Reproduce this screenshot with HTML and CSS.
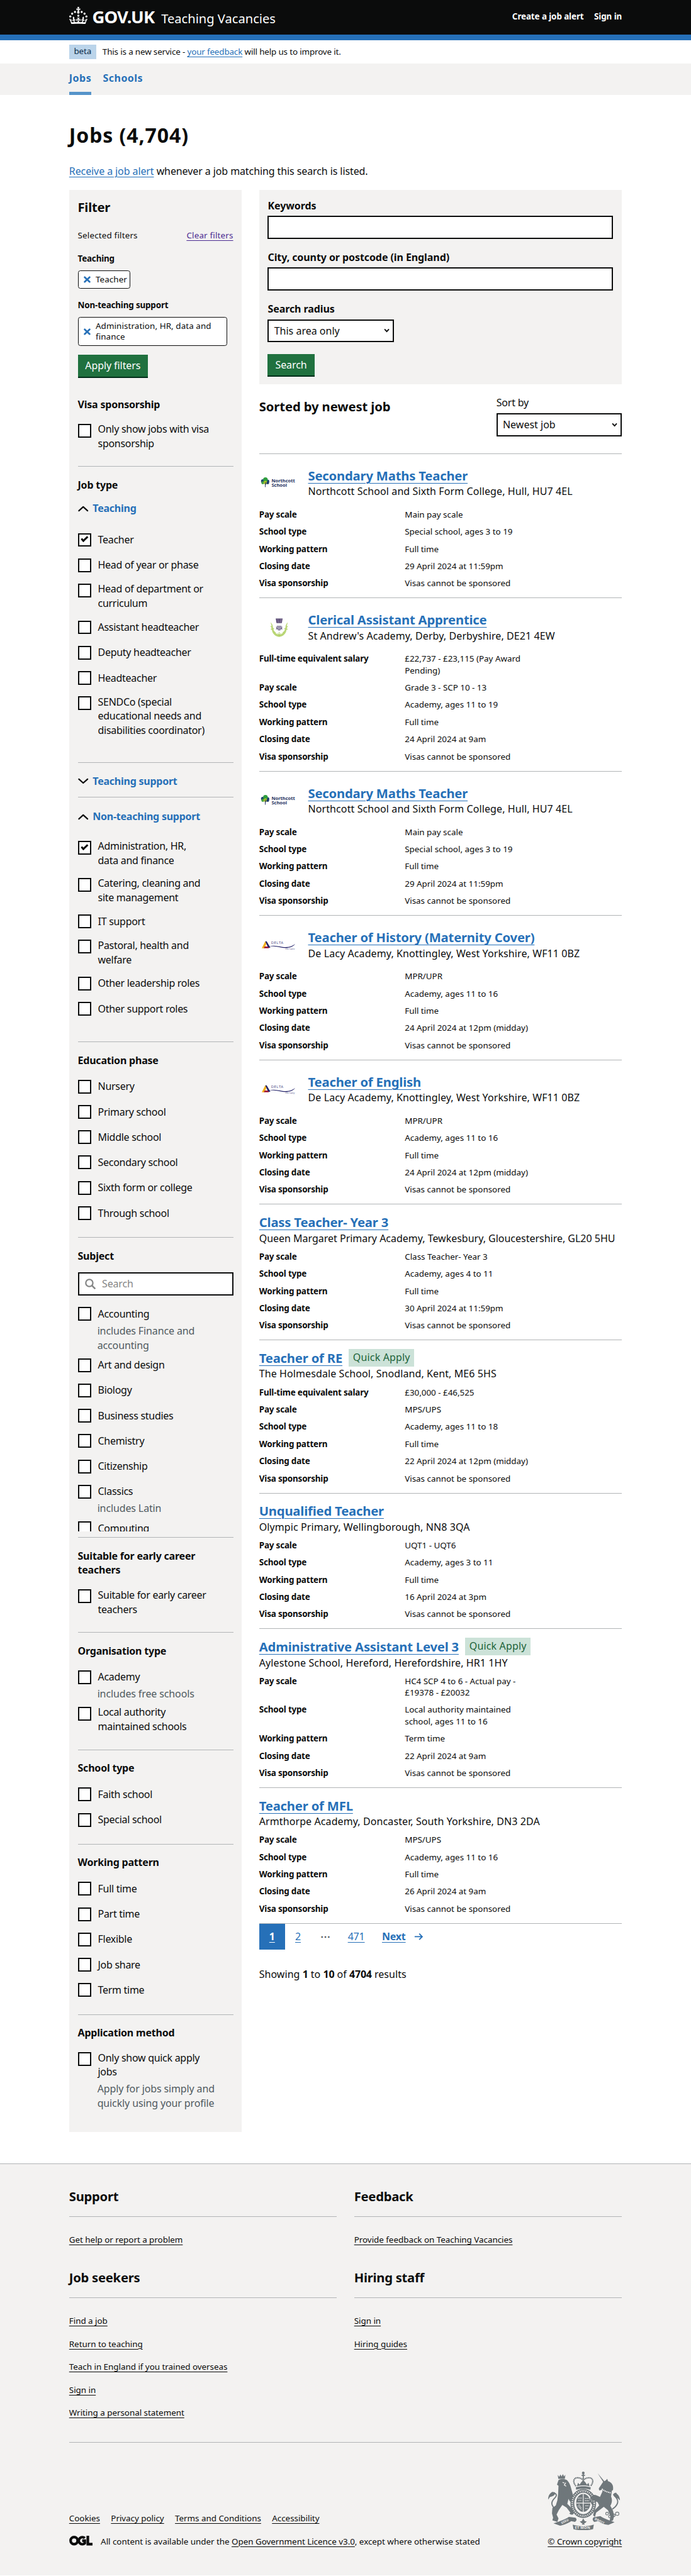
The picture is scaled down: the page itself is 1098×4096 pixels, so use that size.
FILE: index.html
```html
<!DOCTYPE html>
<html lang="en">
<head>
<meta charset="utf-8">
<title>Jobs - Teaching Vacancies - GOV.UK</title>
<link rel="stylesheet" href="styles.css">
</head>
<body>
<header class="header">
  <div class="container header-row">
    <a class="brand">
      <svg class="crown" viewBox="0 0 64 60" fill="#fff"><circle cx="20" cy="17.600" r="3.700"/><circle cx="10.200" cy="23.500" r="3.700"/><circle cx="3.700" cy="33.200" r="3.700"/><circle cx="31.700" cy="30.600" r="3.700"/><circle cx="43.300" cy="17.600" r="3.700"/><circle cx="53.200" cy="23.500" r="3.700"/><circle cx="59.700" cy="33.200" r="3.700"/><path d="M33.100,9.800c.2-.1.3-.3.5-.5l4.600,2.400v-6.800l-4.600,1.500c-.1-.2-.3-.3-.5-.5l1.900-5.900h-6.700l1.900,5.900c-.2.1-.3.3-.5.5l-4.600-1.500v6.800l4.600-2.400c.1.200.3.300.5.500l-2.600,8c-.9,2.800,1.200,5.700,4.100,5.700h0c3,0,5.100-2.900,4.100-5.700l-2.600-8ZM37,37.900s-3.400,3.800-4.100,6.100c2.200,0,4.200-.5,6.400-2.800l-.7,8.500c-2-2.800-4.400-4.100-5.700-3.800.1,3.100.5,6.700,5.800,7.200,3.700.3,6.700-1.500,7-3.800.4-2.600-2-4.300-3.700-1.600-1.400-4.500,2.400-6.100,4.900-3.200-1.900-4.500-1.800-7.700,2.400-10.900,3,4,2.600,7.300-1.200,11.100,2.400-1.300,6.200,0,4,4.600-1.200-2.800-3.700-2.200-4.200.2-.3,1.700.7,3.700,3,4.200,1.900.3,4.700-.9,7-5.900-1.300,0-2.400.7-3.900,1.700l2.400-8c.6,2.300,1.400,3.700,2.200,4.500.6-1.600.5-2.800,0-5.300l5,1.800c-2.600,3.600-5.200,8.700-7.300,17.500-7.400-1.100-15.700-1.700-24.500-1.700h0c-8.800,0-17.100.6-24.500,1.700-2.100-8.900-4.700-13.900-7.300-17.500l5-1.800c-.5,2.500-.6,3.700,0,5.300.8-.8,1.600-2.300,2.200-4.500l2.400,8c-1.500-1-2.600-1.700-3.900-1.700,2.300,5,5.200,6.200,7,5.900,2.300-.4,3.300-2.400,3-4.200-.5-2.400-3-3.100-4.200-.2-2.200-4.600,1.600-6,4-4.600-3.700-3.700-4.200-7.100-1.200-11.100,4.200,3.200,4.300,6.400,2.400,10.900,2.500-2.800,6.300-1.300,4.900,3.200-1.800-2.700-4.100-1-3.700,1.600.3,2.300,3.300,4.100,7,3.800,5.400-.5,5.700-4.200,5.800-7.200-1.300-.2-3.700,1-5.700,3.800l-.7-8.500c2.200,2.300,4.200,2.700,6.400,2.800-.7-2.300-4.100-6.100-4.100-6.100h10.600,0Z"/></svg>
      <span class="wordmark">GOV.UK</span><span class="service">Teaching Vacancies</span>
    </a>
    <nav class="header-nav"><a>Create a job alert</a><a>Sign in</a></nav>
  </div>
</header>
<div class="stripe"></div>
<div class="container phase"><span class="beta">beta</span><span>This is a new service - <a class="link">your feedback</a> will help us to improve it.</span></div>
<nav class="subnav"><div class="container subnav-row"><a class="active">Jobs</a><a>Schools</a></div></nav>

<main class="container">
  <h1>Jobs (4,704)</h1>
  <p class="alert"><a class="link">Receive a job alert</a> whenever a job matching this search is listed.</p>

  <div class="columns">
    <aside class="filters">
      <h2>Filter</h2>
      <div class="selected"><span>Selected filters</span><a class="link visited">Clear filters</a></div>
      <h3>Teaching</h3>
      <a class="tag"><svg viewBox="0 0 12 12"><path d="M1.700 2 10.300 10M10.300 2 1.700 10" stroke="#2670b8" stroke-width="3" stroke-linecap="round"/></svg><span>Teacher</span></a>
      <h3>Non-teaching support</h3>
      <a class="tag wide"><svg viewBox="0 0 12 12"><path d="M1.700 2 10.300 10M10.300 2 1.700 10" stroke="#2670b8" stroke-width="3" stroke-linecap="round"/></svg><span>Administration, HR, data and finance</span></a>
      <button class="button">Apply filters</button>

      <section class="group first">
        <h4>Visa sponsorship</h4>
        <label class="check"><input type="checkbox"><span>Only show jobs with visa sponsorship</span></label>
      </section>

      <section class="group jobtype">
        <h4>Job type</h4>
        <div class="fold open">
          <div class="fold-head"><svg viewBox="0 0 18 12"><path d="M1.500 10 9 3.200 16.500 10"/></svg>Teaching</div>
          <div class="fold-body">
            <label class="check"><input type="checkbox" checked><span>Teacher</span></label>
            <label class="check"><input type="checkbox"><span>Head of year or phase</span></label>
            <label class="check"><input type="checkbox"><span>Head of department or curriculum</span></label>
            <label class="check"><input type="checkbox"><span>Assistant headteacher</span></label>
            <label class="check"><input type="checkbox"><span>Deputy headteacher</span></label>
            <label class="check"><input type="checkbox"><span>Headteacher</span></label>
            <label class="check"><input type="checkbox"><span>SENDCo (special educational needs and disabilities coordinator)</span></label>
          </div>
        </div>
        <div class="fold"><div class="fold-head"><svg viewBox="0 0 18 12"><path d="M1.500 2 9 8.800 16.500 2"/></svg>Teaching support</div></div>
        <div class="fold open">
          <div class="fold-head"><svg viewBox="0 0 18 12"><path d="M1.500 10 9 3.200 16.500 10"/></svg>Non-teaching support</div>
          <div class="fold-body">
            <label class="check"><input type="checkbox" checked><span>Administration, HR,<br>data and finance</span></label>
            <label class="check"><input type="checkbox"><span>Catering, cleaning and<br>site management</span></label>
            <label class="check"><input type="checkbox"><span>IT support</span></label>
            <label class="check"><input type="checkbox"><span>Pastoral, health and<br>welfare</span></label>
            <label class="check"><input type="checkbox"><span>Other leadership roles</span></label>
            <label class="check"><input type="checkbox"><span>Other support roles</span></label>
          </div>
        </div>
      </section>

      <section class="group">
        <h4>Education phase</h4>
        <label class="check"><input type="checkbox"><span>Nursery</span></label>
        <label class="check"><input type="checkbox"><span>Primary school</span></label>
        <label class="check"><input type="checkbox"><span>Middle school</span></label>
        <label class="check"><input type="checkbox"><span>Secondary school</span></label>
        <label class="check"><input type="checkbox"><span>Sixth form or college</span></label>
        <label class="check"><input type="checkbox"><span>Through school</span></label>
      </section>

      <section class="group subject">
        <h4>Subject</h4>
        <div class="finder"><svg viewBox="0 0 20 20"><circle cx="8" cy="8" r="6.500" fill="none" stroke="#858686" stroke-width="2.600"/><path d="m12.800 12.800 6 6" stroke="#858686" stroke-width="3"/></svg><span>Search</span></div>
        <div class="scroller">
          <label class="check"><input type="checkbox"><span>Accounting</span></label><p class="hint">includes Finance and accounting</p>
          <label class="check"><input type="checkbox"><span>Art and design</span></label>
          <label class="check"><input type="checkbox"><span>Biology</span></label>
          <label class="check"><input type="checkbox"><span>Business studies</span></label>
          <label class="check"><input type="checkbox"><span>Chemistry</span></label>
          <label class="check"><input type="checkbox"><span>Citizenship</span></label>
          <label class="check"><input type="checkbox"><span>Classics</span></label><p class="hint">includes Latin</p>
          <label class="check"><input type="checkbox"><span>Computing</span></label>
        </div>
      </section>

      <section class="group">
        <h4>Suitable for early career teachers</h4>
        <label class="check"><input type="checkbox"><span>Suitable for early career teachers</span></label>
      </section>
      <section class="group">
        <h4>Organisation type</h4>
        <label class="check"><input type="checkbox"><span>Academy</span></label><p class="hint">includes free schools</p>
        <label class="check"><input type="checkbox"><span>Local authority maintained schools</span></label>
      </section>
      <section class="group">
        <h4>School type</h4>
        <label class="check"><input type="checkbox"><span>Faith school</span></label>
        <label class="check"><input type="checkbox"><span>Special school</span></label>
      </section>
      <section class="group">
        <h4>Working pattern</h4>
        <label class="check"><input type="checkbox"><span>Full time</span></label>
        <label class="check"><input type="checkbox"><span>Part time</span></label>
        <label class="check"><input type="checkbox"><span>Flexible</span></label>
        <label class="check"><input type="checkbox"><span>Job share</span></label>
        <label class="check"><input type="checkbox"><span>Term time</span></label>
      </section>
      <section class="group last">
        <h4>Application method</h4>
        <label class="check"><input type="checkbox"><span>Only show quick apply<br>jobs</span></label><p class="hint">Apply for jobs simply and quickly using your profile</p>
      </section>
    </aside>

    <div class="results">
      <form class="search">
        <div class="field"><div class="field-label">Keywords</div><div class="input"></div></div>
        <div class="field"><div class="field-label">City, county or postcode (in England)</div><div class="input"></div></div>
        <div class="field"><div class="field-label">Search radius</div><div class="select">This area only<svg viewBox="0 0 10 8"><path d="M1.200 1.500 5 5.700 8.800 1.500"/></svg></div></div>
        <button class="button" type="button">Search</button>
      </form>
      <div class="sort">
        <h2>Sorted by newest job</h2>
        <div class="sort-field"><div class="sort-label">Sort by</div><div class="select">Newest job<svg viewBox="0 0 10 8"><path d="M1.200 1.500 5 5.700 8.800 1.500"/></svg></div></div>
      </div>

      <article class="job with-logo">
        <div class="job-head"><div class="logo"><svg class="l-north" viewBox="0 0 64 20"><circle cx="4" cy="6.500" r="3.200" fill="#1d3f72"/><circle cx="12" cy="7" r="3.200" fill="#1d3f72"/><circle cx="8.500" cy="4" r="4" fill="#2f9e3f"/><circle cx="4" cy="9.500" r="2.600" fill="#43a047"/><circle cx="8.500" cy="9" r="3" fill="#b9cf1c"/><circle cx="12.500" cy="9.500" r="2.400" fill="#1d3f72"/><path d="M8.200 8v9M8.200 13l3-3" stroke="#1d2b60" fill="none"/><text x="19" y="8.700" class="logo-text">Northcott</text><text x="19" y="16.300" class="logo-text">School</text></svg></div><div><h3><a>Secondary Maths Teacher</a></h3><p>Northcott School and Sixth Form College, Hull, HU7 4EL</p></div></div>
        <dl><dt>Pay scale</dt><dd>Main pay scale</dd><dt>School type</dt><dd>Special school, ages 3 to 19</dd><dt>Working pattern</dt><dd>Full time</dd><dt>Closing date</dt><dd>29 April 2024 at 11:59pm</dd><dt>Visa sponsorship</dt><dd>Visas cannot be sponsored</dd></dl>
      </article>
      <article class="job with-logo">
        <div class="job-head"><div class="logo"><svg class="l-thistle" viewBox="0 0 32 33"><path d="M10 .5h12l-1.500 8h-9z" fill="#4b3a66"/><path d="M12.500 1l1.300 7M15.200 1l.3 7M18.300 1l-.8 7M20.500 1l-1.500 7" stroke="#b9aecb" stroke-width=".7"/><path d="M12 13.500h8v1.500h2l-1.500 2 1.500 2h-2.500l-2 2h-3l-2-2H10l1.500-2-1.500-2h2z" fill="#6b6285"/><path d="M12 15.500h8M13 18.500h6" stroke="#fff"/><path d="M1 7c3 3 4.500 6 4 9.500L7.500 18 6 19.500c.5 2.500 2 4 4 5v1.500c2 1.500 4 2.500 6 3 2-.5 4-1.500 6-3v-1.500c2-1 3.500-2.500 4-5L24.500 18l2.500-1.500C26.500 13 28 10 31 7l-2 7 2.500-.5-2.500 4 2.200 1.500-2.700 1.500C28 27 23 31.500 16 32.500 9 31.500 4 27 3.500 20.500L.8 19l2.200-1.500-2.500-4 2.500.5z" fill="#b9d675"/><path d="M16 31v-7M16 30l-3-4M16 30l3-4" stroke="#a9cb5d" fill="none"/></svg></div><div><h3><a>Clerical Assistant Apprentice</a></h3><p>St Andrew's Academy, Derby, Derbyshire, DE21 4EW</p></div></div>
        <dl><dt>Full-time equivalent salary</dt><dd>£22,737 - £23,115 (Pay Award Pending)</dd><dt>Pay scale</dt><dd>Grade 3 - SCP 10 - 13</dd><dt>School type</dt><dd>Academy, ages 11 to 19</dd><dt>Working pattern</dt><dd>Full time</dd><dt>Closing date</dt><dd>24 April 2024 at 9am</dd><dt>Visa sponsorship</dt><dd>Visas cannot be sponsored</dd></dl>
      </article>
      <article class="job with-logo">
        <div class="job-head"><div class="logo"><svg class="l-north" viewBox="0 0 64 20"><circle cx="4" cy="6.500" r="3.200" fill="#1d3f72"/><circle cx="12" cy="7" r="3.200" fill="#1d3f72"/><circle cx="8.500" cy="4" r="4" fill="#2f9e3f"/><circle cx="4" cy="9.500" r="2.600" fill="#43a047"/><circle cx="8.500" cy="9" r="3" fill="#b9cf1c"/><circle cx="12.500" cy="9.500" r="2.400" fill="#1d3f72"/><path d="M8.200 8v9M8.200 13l3-3" stroke="#1d2b60" fill="none"/><text x="19" y="8.700" class="logo-text">Northcott</text><text x="19" y="16.300" class="logo-text">School</text></svg></div><div><h3><a>Secondary Maths Teacher</a></h3><p>Northcott School and Sixth Form College, Hull, HU7 4EL</p></div></div>
        <dl><dt>Pay scale</dt><dd>Main pay scale</dd><dt>School type</dt><dd>Special school, ages 3 to 19</dd><dt>Working pattern</dt><dd>Full time</dd><dt>Closing date</dt><dd>29 April 2024 at 11:59pm</dd><dt>Visa sponsorship</dt><dd>Visas cannot be sponsored</dd></dl>
      </article>
      <article class="job with-logo">
        <div class="job-head"><div class="logo"><svg class="l-delta" viewBox="0 0 58 17"><path d="M0 14 6 2l2.500 3L4.500 14z" fill="#f3b01c"/><path d="M6 2h2.500l6.500 11h-4z" fill="#25246b"/><path d="M3.500 14l1.500-3h5.500l2 3z" fill="#a11734"/><path d="M12 10.500c9-2 16 0 24 1.200 9 1.300 17-1 22-5.200-4 5.500-12 8-22 6.500-9-1.300-15-3-24-2.500z" fill="#25246b"/><text x="16" y="7" class="delta-text">DELTA</text><text x="41" y="16.500" class="delta-small">De Lacy</text></svg></div><div><h3><a>Teacher of History (Maternity Cover)</a></h3><p>De Lacy Academy, Knottingley, West Yorkshire, WF11 0BZ</p></div></div>
        <dl><dt>Pay scale</dt><dd>MPR/UPR</dd><dt>School type</dt><dd>Academy, ages 11 to 16</dd><dt>Working pattern</dt><dd>Full time</dd><dt>Closing date</dt><dd>24 April 2024 at 12pm (midday)</dd><dt>Visa sponsorship</dt><dd>Visas cannot be sponsored</dd></dl>
      </article>
      <article class="job with-logo">
        <div class="job-head"><div class="logo"><svg class="l-delta" viewBox="0 0 58 17"><path d="M0 14 6 2l2.500 3L4.500 14z" fill="#f3b01c"/><path d="M6 2h2.500l6.500 11h-4z" fill="#25246b"/><path d="M3.500 14l1.500-3h5.500l2 3z" fill="#a11734"/><path d="M12 10.500c9-2 16 0 24 1.200 9 1.300 17-1 22-5.200-4 5.500-12 8-22 6.500-9-1.300-15-3-24-2.500z" fill="#25246b"/><text x="16" y="7" class="delta-text">DELTA</text><text x="41" y="16.500" class="delta-small">De Lacy</text></svg></div><div><h3><a>Teacher of English</a></h3><p>De Lacy Academy, Knottingley, West Yorkshire, WF11 0BZ</p></div></div>
        <dl><dt>Pay scale</dt><dd>MPR/UPR</dd><dt>School type</dt><dd>Academy, ages 11 to 16</dd><dt>Working pattern</dt><dd>Full time</dd><dt>Closing date</dt><dd>24 April 2024 at 12pm (midday)</dd><dt>Visa sponsorship</dt><dd>Visas cannot be sponsored</dd></dl>
      </article>
      <article class="job">
        <h3><a>Class Teacher- Year 3</a></h3><p class="long">Queen Margaret Primary Academy, Tewkesbury, Gloucestershire, GL20 5HU</p>
        <dl><dt>Pay scale</dt><dd>Class Teacher- Year 3</dd><dt>School type</dt><dd>Academy, ages 4 to 11</dd><dt>Working pattern</dt><dd>Full time</dd><dt>Closing date</dt><dd>30 April 2024 at 11:59pm</dd><dt>Visa sponsorship</dt><dd>Visas cannot be sponsored</dd></dl>
      </article>
      <article class="job">
        <h3><a>Teacher of RE</a><span class="quick">Quick Apply</span></h3><p>The Holmesdale School, Snodland, Kent, ME6 5HS</p>
        <dl><dt>Full-time equivalent salary</dt><dd>£30,000 - £46,525</dd><dt>Pay scale</dt><dd>MPS/UPS</dd><dt>School type</dt><dd>Academy, ages 11 to 18</dd><dt>Working pattern</dt><dd>Full time</dd><dt>Closing date</dt><dd>22 April 2024 at 12pm (midday)</dd><dt>Visa sponsorship</dt><dd>Visas cannot be sponsored</dd></dl>
      </article>
      <article class="job">
        <h3><a>Unqualified Teacher</a></h3><p>Olympic Primary, Wellingborough, NN8 3QA</p>
        <dl><dt>Pay scale</dt><dd>UQT1 - UQT6</dd><dt>School type</dt><dd>Academy, ages 3 to 11</dd><dt>Working pattern</dt><dd>Full time</dd><dt>Closing date</dt><dd>16 April 2024 at 3pm</dd><dt>Visa sponsorship</dt><dd>Visas cannot be sponsored</dd></dl>
      </article>
      <article class="job">
        <h3><a>Administrative Assistant Level 3</a><span class="quick">Quick Apply</span></h3><p>Aylestone School, Hereford, Herefordshire, HR1 1HY</p>
        <dl><dt>Pay scale</dt><dd>HC4 SCP 4 to 6 - Actual pay - £19378 - £20032</dd><dt>School type</dt><dd>Local authority maintained school, ages 11 to 16</dd><dt>Working pattern</dt><dd>Term time</dd><dt>Closing date</dt><dd>22 April 2024 at 9am</dd><dt>Visa sponsorship</dt><dd>Visas cannot be sponsored</dd></dl>
      </article>
      <article class="job">
        <h3><a>Teacher of MFL</a></h3><p>Armthorpe Academy, Doncaster, South Yorkshire, DN3 2DA</p>
        <dl><dt>Pay scale</dt><dd>MPS/UPS</dd><dt>School type</dt><dd>Academy, ages 11 to 16</dd><dt>Working pattern</dt><dd>Full time</dd><dt>Closing date</dt><dd>26 April 2024 at 9am</dd><dt>Visa sponsorship</dt><dd>Visas cannot be sponsored</dd></dl>
      </article>

      <nav class="pages">
        <a class="page current"><span>1</span></a><a class="page"><span>2</span></a><span class="dots">⋯</span><a class="page"><span>471</span></a>
        <a class="next"><span>Next</span><svg viewBox="0 0 17 14"><path d="M1 7h14M9.500 1.500 15 7l-5.500 5.500" fill="none" stroke="#2670b8" stroke-width="2.100"/></svg></a>
      </nav>
      <p class="showing">Showing <b>1</b> to <b>10</b> of <b>4704</b> results</p>
    </div>
  </div>
</main>

<footer class="footer">
  <div class="container">
    <div class="foot-grid">
      <div><h2>Support</h2><ul><li><a>Get help or report a problem</a></li></ul></div>
      <div><h2>Feedback</h2><ul><li><a>Provide feedback on Teaching Vacancies</a></li></ul></div>
      <div><h2>Job seekers</h2><ul><li><a>Find a job</a></li><li><a>Return to teaching</a></li><li><a>Teach in England if you trained overseas</a></li><li><a>Sign in</a></li><li><a>Writing a personal statement</a></li></ul></div>
      <div><h2>Hiring staff</h2><ul><li><a>Sign in</a></li><li><a>Hiring guides</a></li></ul></div>
    </div>
    <div class="foot-meta">
      <div class="foot-left">
        <div class="foot-links"><a>Cookies</a><a>Privacy policy</a><a>Terms and Conditions</a><a>Accessibility</a></div>
        <div class="licence">
          <svg class="ogl" viewBox="0 0 41 17"><g fill="none" stroke="#0b0c0c" stroke-width="4.600"><circle cx="8.500" cy="8.500" r="6.100"/><path d="M27 4.200A6.100 6.100 0 1 0 27 13V8.600h-4.500"/><path d="M32.300 0v14.600H41"/></g></svg>
          <span>All content is available under the <a>Open Government Licence v3.0</a>, except where otherwise stated</span>
        </div>
      </div>
      <div class="foot-right">
        <svg class="crest" viewBox="0 0 375 306" fill="#6f777b">
          <!-- lion supporter -->
          <path d="M50 17l8 10 6-12 6 10 7-12 6 12 7-9-3 22H53z"/>
          <path d="M58 42c12-5 28-4 40 2 8 8 14 18 18 30l12 42 6 30-8 18c-10-4-16-12-20-22l-6 26 18 18 14 26c4 10-4 14-14 12l-8-6 6-4-20-26-22-14-18 26-12 24 10 20-6 18-26-8 4-14-6-22 2-28 18-14 8-26 4-34 2-42-8-6 8-24z"/>
          <path d="M44 204C14 176 12 160 34 138c14-14 10-24-6-26" fill="none" stroke="#6f777b" stroke-width="6"/>
          <path d="M0 146c0-22 10-34 22-40l14 2c2 18-14 20-26 24z"/>
          <path d="M75 56l10 4M92 58l-8 12 10 6" stroke="#f3f2f1" stroke-width="4" fill="none"/>
          <!-- crown -->
          <circle cx="183" cy="7" r="7"/><path d="M180 4h6v36h-6zM174 16h18v6h-18z"/>
          <path d="M145 76c-18-22-14-42 6-44 14 0 24 4 32 14 8-10 18-14 32-14 20 2 24 22 6 44" fill="none" stroke="#6f777b" stroke-width="7" stroke-dasharray="6 2"/>
          <path d="M144 82c24-8 54-8 78 0l-2 12c-24-6-50-6-74 0zM150 76l6-18 8 10 8-12 11-12 11 12 8 12 8-10 6 18c-20-5-46-5-66 0z"/>
          <!-- shield and garter -->
          <ellipse cx="183" cy="166" rx="57" ry="66" fill="none" stroke="#6f777b" stroke-width="20"/>
          <ellipse cx="183" cy="166" rx="57" ry="66" fill="none" stroke="#f3f2f1" stroke-width="9" stroke-dasharray="4 6"/>
          <ellipse cx="183" cy="163" rx="37" ry="47"/>
          <path d="M183 116v96M147 164h74" stroke="#f3f2f1" stroke-width="4"/>
          <path d="M155 138h20M157 150h18M192 140h20M192 152h20M155 178l18 20M160 172l14 20M194 178h18M194 192h12" stroke="#f3f2f1" stroke-width="4" stroke-dasharray="5 3"/>
          <!-- unicorn supporter -->
          <path d="M258 8l36 44-6 4z"/>
          <path d="M286 54l14-8 8-8 4 12c20 6 30 22 26 46l-6 4-4 30c8 18 4 36-4 48l14 26 6 28-6 22-18 8 4-28-12-32-22-18-14 10-26 20-6 22-10-8 6-24 26-28-8-16-22-10-12-8 4 16 12 14-10 4-12-22 2-20 14-12c10-4 26 4 36 10l12-26 2-12-18 4-2-10z"/>
          <path d="M280 90c14 12 30 18 46 20" fill="none" stroke="#f3f2f1" stroke-width="6" stroke-dasharray="6 3"/>
          <path d="M334 196c30-20 36-42 20-60-14-16-10-24 2-22" fill="none" stroke="#6f777b" stroke-width="6"/>
          <path d="M374 150c0-20-10-32-24-40l-12 8c2 14 18 18 26 22z"/>
          <g fill="none" stroke="#6f777b" stroke-width="3.500"><circle cx="307" cy="219" r="7"/><circle cx="322" cy="234" r="7"/><circle cx="342" cy="228" r="7"/><circle cx="360" cy="220" r="9"/></g>
          <!-- motto ribbon -->
          <path d="M28 270c20-8 54-16 80-34l34 4c10 8 6 16-2 22l-20-4c-14 10-36 20-58 24zM346 264c-20-8-46-14-74-32l-34 6c-10 8-6 18 2 24l20-4c14 10 32 18 54 20zM128 276c36 12 74 12 110 0l-4 24c-34 8-68 8-102 0z"/>
          <path d="M183 244l8 14 10 2-8 8-6 2 4 6h-16l4-6-6-2-8-8 10-2z"/>
          <text x="139" y="300" class="motto">ET MON</text>
          <text transform="translate(71 274) rotate(-27)" class="motto side">DIEU</text>
          <text transform="translate(241 250) rotate(27)" class="motto side">DROIT</text>
        </svg>
        <a>© Crown copyright</a>
      </div>
    </div>
  </div>
</footer>
</body>
</html>
```
FILE: styles.css
```css
/* All sizes are in rem on a 9.15px root, so the page scales as one unit. */
* { box-sizing: border-box; }
html { background: #fff; font-size: 9.15px; }
body {
  margin: 0;
  color: #0b0c0c;
  font-family: "Noto Sans", "Open Sans", sans-serif;
  font-size: 1.75rem;
  line-height: 2.5rem;
  letter-spacing: -0.012em;
}
h1, h2, h3, h4, p, ul, dl, dd { margin: 0; padding: 0; }
h1, h2, h3, h4, b, dt { font-weight: 700; letter-spacing: -0.013em; }
.container { width: 96rem; margin: 0 auto; }
.link { color: #2670b8; text-decoration: underline; text-decoration-thickness: 1px; text-underline-offset: 0.3rem; }
.visited { color: #4c2c92; }

/* Header */
.header { background: #0b0c0c; color: #fff; height: 6rem; }
.header-row { display: flex; justify-content: space-between; height: 6rem; }
.brand { display: flex; padding-top: 1.2rem; }
.crown { width: 3.2rem; height: 3rem; }
.wordmark { margin-left: 0.8rem; width: 11.2rem; font-size: 3rem; font-weight: 700; line-height: 3.6rem; letter-spacing: -0.03em; }
.service { margin-left: 0.8rem; font-size: 2.2rem; line-height: 4rem; letter-spacing: 0; white-space: nowrap; }
.header-nav { display: flex; gap: 1.8rem; padding-top: 1.9rem; font-size: 1.47rem; font-weight: 700; line-height: 2rem; letter-spacing: -0.008em; }
.stripe { height: 1rem; background: #2670b8; }
.phase { display: flex; align-items: center; height: 4rem; font-size: 1.47rem; line-height: 2rem; letter-spacing: -0.012em; }
.beta { width: 4.7rem; height: 2.5rem; margin-right: 1.1rem; background: #bbd4ea; color: #0c2d4a; text-align: center; line-height: 2.4rem; }
.subnav { height: 5.5rem; background: #f3f2f1; }
.subnav-row { display: flex; gap: 2rem; color: #2670b8; font-weight: 700; letter-spacing: 0.03em; }
.subnav-row a { height: 5.5rem; padding-top: 1.4rem; }
.subnav-row .active { border-bottom: 5px solid #5694ca; }

h1 { padding-top: 5rem; font-size: 3.5rem; line-height: 4rem; height: 9rem; letter-spacing: 0.028em; }
.alert { padding-top: 3rem; height: 7.5rem; letter-spacing: -0.006em; }
.columns { display: grid; grid-template-columns: 30rem 63rem; gap: 3rem; align-items: start; height: 343rem; }

/* Filter panel */
.filters { background: #f3f2f1; padding: 1.5rem 1.5rem 4rem; height: 337.5rem; }
.filters h2 { font-size: 2.21rem; line-height: 3rem; }
.filters h3 { font-size: 1.47rem; line-height: 2rem; margin: 1.9rem 0 1.1rem; }
.selected { display: flex; justify-content: space-between; margin-top: 2.4rem; font-size: 1.47rem; line-height: 2rem; letter-spacing: 0.012em; }
.selected + h3 { margin-top: 2rem; }
.tag { display: flex; align-items: center; gap: 0.9rem; width: 9.1rem; padding: 0.5rem 0 0.5rem 0.9rem; border: 1px solid #0b0c0c; border-radius: 0.4rem; background: #fff; font-size: 1.47rem; line-height: 1.9rem; letter-spacing: 0.005em; }
.tag svg { width: 1.2rem; height: 1.2rem; flex: none; }
.tag.wide { width: 26rem; padding-right: 2rem; }
.button { display: block; height: 3.8rem; padding: 0 1.2rem; border: 0; background: #20713f; box-shadow: 0 2px 0 #002d18; color: #fff; font: inherit; letter-spacing: -0.005em; line-height: 3.6rem; white-space: nowrap; }
.filters .button { width: 12.2rem; margin-top: 1.5rem; }
.group { border-top: 1px solid #b1b4b6; padding: 1.9rem 0 2rem; }
.group h4 { font-size: 1.75rem; line-height: 2.5rem; margin-bottom: 1.1rem; }
.group.first { border: 0; margin-top: 3.7rem; padding-top: 0; }
.group.first h4 { margin-bottom: 1rem; }
.group.jobtype { padding-bottom: 0; }
.check { display: grid; grid-template-columns: 2.4rem 20.1rem; column-gap: 1.1rem; min-height: 4.4rem; align-items: center; letter-spacing: -0.018em; }
.check span { padding: 0.7rem 0; }
.check input { appearance: none; align-self: start; width: 2.4rem; height: 2.4rem; margin: 1rem 0; border: 2px solid #0b0c0c; background: #fff; display: grid; place-items: center; }
.check input:checked::after { content: ""; box-sizing: border-box; width: 1.2rem; height: 0.7rem; margin-top: -0.4rem; border: solid #0b0c0c; border-width: 0 0 3px 3px; transform: rotate(-43deg); }
.hint { width: 21.5rem; margin: -0.5rem 0 0 3.4rem; color: #505a5f; letter-spacing: -0.008em; }
.last .hint { margin-top: -0.3rem; }
.fold { border-top: 1px solid #b1b4b6; padding: 2rem 0 1.5rem; }
.group.jobtype h4 { margin-bottom: 0; }
.jobtype h4 + .fold { border-top: 0; padding-top: 1.6rem; }
.fold.open { padding-bottom: 3.5rem; }
.fold-head { display: flex; align-items: center; gap: 0.6rem; color: #2670b8; font-weight: 700; letter-spacing: -0.015em; }
.fold-head svg { width: 1.8rem; height: 1.2rem; margin: 0 0.1rem; fill: none; stroke: #0b0c0c; stroke-width: 2.4; stroke-linecap: round; stroke-linejoin: round; }
.fold-body { padding-top: 2rem; }
.group.subject { padding-bottom: 1rem; }
.finder { display: flex; align-items: center; gap: 1.1rem; height: 4rem; margin-top: 1.6rem; padding: 0 1rem; border: 2px solid #0b0c0c; background: #fff; color: #858686; }
.finder svg { width: 1.9rem; height: 1.9rem; }
.scroller { height: 40rem; margin-top: 1rem; overflow: hidden; }

/* Search form */
.search { height: 33.8rem; padding: 1.5rem; background: #f3f2f1; }
.field { margin-bottom: 2rem; }
.field-label { font-weight: 700; letter-spacing: -0.005em; height: 3rem; }
.input { height: 4rem; border: 2px solid #0b0c0c; background: #fff; }
.select { display: flex; align-items: center; justify-content: space-between; width: 21.9rem; height: 4rem; padding: 0 0.5rem 0 0.9rem; border: 2px solid #0b0c0c; background: #fff; letter-spacing: 0; }
.select svg { width: 1rem; height: 0.8rem; fill: none; stroke: #0b0c0c; stroke-width: 2; }
.search .button { width: 8.1rem; }
.sort { display: flex; justify-content: space-between; height: 12.1rem; padding-top: 1.9rem; border-bottom: 1px solid #b1b4b6; }
.sort h2 { padding-top: 0.5rem; font-size: 2.21rem; line-height: 3rem; letter-spacing: -0.005em; }
.sort-label { height: 3.1rem; }
.sort-field .select { width: 21.8rem; }

/* Job results */
.job { border-bottom: 1px solid #b1b4b6; padding: 1.6rem 0 1rem; }
.job.with-logo { padding-top: 2.3rem; }
.job-head { display: flex; }
.logo { display: flex; align-items: center; justify-content: center; width: 7rem; margin-right: 1.5rem; }
.l-north { width: 6.4rem; height: 2rem; }
.l-thistle { width: 3.2rem; height: 3.3rem; }
.l-delta { width: 5.8rem; height: 1.7rem; margin-right: 0.3rem; }
.logo-text { font: 700 8.2px "Noto Sans", sans-serif; fill: #24305e; letter-spacing: 0; }
.delta-text { font: 400 6.5px "Noto Sans", sans-serif; fill: #4a4d86; letter-spacing: 0.6px; }
.delta-small { font: 400 4.5px "Noto Sans", sans-serif; fill: #4a4d86; letter-spacing: 0; }
.job h3 { display: flex; font-size: 2.21rem; line-height: 3rem; letter-spacing: -0.009em; }
.job h3 a { color: #2670b8; text-decoration: underline; text-decoration-thickness: 1.2px; text-underline-offset: 0.4rem; }
.quick { margin: -0.1rem 0 0.1rem 1.1rem; width: 11.4rem; height: 3rem; background: #cce2d8; color: #1b6339; font-size: 1.75rem; font-weight: 400; line-height: 2.9rem; letter-spacing: 0.01em; text-align: center; }
.job p { height: 2.5rem; white-space: nowrap; letter-spacing: 0.006em; }
.job p.long { letter-spacing: -0.001em; }
.job dl { display: grid; grid-template-columns: 25.3rem 23rem; margin-top: 0.4rem; font-size: 1.47rem; line-height: 2rem; letter-spacing: -0.002em; }
.with-logo dl { margin-top: 1.2rem; }
.job dt, .job dd { padding: 0.5rem 0; }

.pages { display: flex; align-items: center; height: 4.5rem; color: #2670b8; }
.page { display: flex; align-items: center; justify-content: center; height: 4.5rem; min-width: 4.5rem; padding: 0 1.5rem; }
.page span, .next span { text-decoration: underline; text-decoration-thickness: 1px; text-underline-offset: 0.3rem; }
.current { background: #2670b8; color: #fff; font-weight: 700; }
.dots { width: 4.9rem; text-align: center; color: #505a5f; font-weight: 700; }
.next { display: flex; align-items: center; gap: 1.5rem; margin-left: 1.5rem; font-weight: 700; letter-spacing: -0.013em; }
.next svg { width: 1.6rem; height: 1.4rem; }
.showing { padding-top: 3.1rem; letter-spacing: 0.002em; }

/* Footer */
.footer { height: 71.6rem; overflow: hidden; background: #f3f2f1; border-top: 1px solid #b1b4b6; font-size: 1.47rem; line-height: 2rem; letter-spacing: -0.003em; }
.footer a { text-decoration: underline; text-decoration-thickness: 1px; text-underline-offset: 0.3rem; }
.foot-grid { display: grid; grid-template-columns: 46.5rem 46.5rem; grid-template-rows: 14.1rem 34.2rem; column-gap: 3rem; height: 48.3rem; margin-top: 4rem; }
.foot-grid h2 { height: 5.1rem; padding-top: 0.1rem; font-size: 2.21rem; line-height: 3rem; border-bottom: 1px solid #b1b4b6; }
.foot-grid ul { display: grid; gap: 2rem; margin-top: 3rem; list-style: none; }
.foot-meta { display: flex; justify-content: space-between; height: 19rem; margin-top: -4rem; border-top: 1px solid #b1b4b6; }
.foot-left { padding-top: 12.1rem; }
.foot-links { display: flex; gap: 1.9rem; }
.licence { display: flex; margin-top: 2rem; }
.ogl { width: 4.1rem; height: 1.7rem; margin: 0.1rem 1.4rem 0 0; }
.foot-right { display: flex; flex-direction: column; align-items: flex-end; padding-top: 5rem; }
.crest { width: 12.5rem; height: 10.2rem; margin: 0 0.3rem 0.9rem 0; }
.motto { font: 700 19px "Noto Sans", sans-serif; fill: #f3f2f1; letter-spacing: 1px; }
.side { font-size: 16px; }
```
